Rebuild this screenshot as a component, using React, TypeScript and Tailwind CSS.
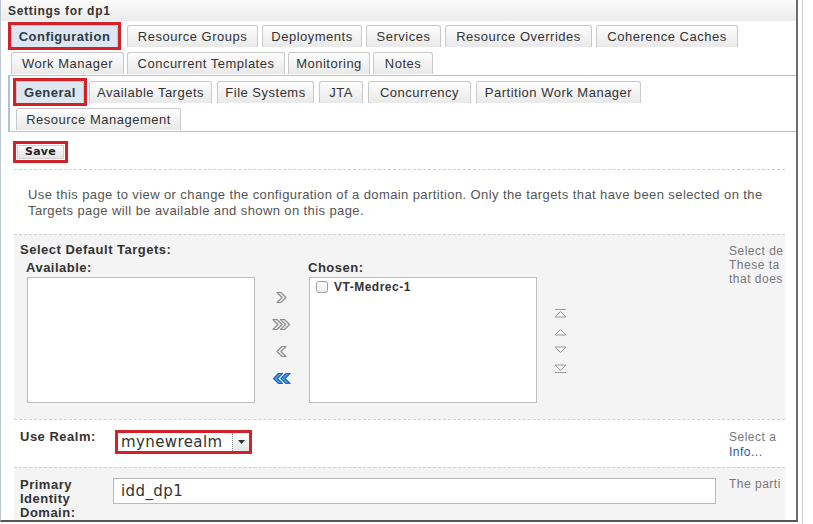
import React from 'react';

const RED = 'border-[#d42027]';

function Tab({ label, w, selected }: { label: string; w: number; selected?: boolean }) {
    const tab = (
        <div
            style={{ width: w }}
            className={
                'h-[22px] flex items-center justify-center rounded-t-[3px] border border-b-0 border-[#c9c9c9] text-[13px] tracking-[0.5px] whitespace-nowrap ' +
                (selected
                    ? 'bg-[#dde7f1] font-bold text-[#2f3a44]'
                    : 'bg-gradient-to-b from-[#fdfdfd] to-[#e9e9e9] text-[#333]')
            }
        >
            {label}
        </div>
    );
    if (!selected) return tab;
    return <div className={'border-[3px] ' + RED + ' -m-[3px]'}>{tab}</div>;
}

function Chevron({ double, left, blue }: { double?: boolean; left?: boolean; blue?: boolean }) {
    const stroke = blue ? '#1a66bd' : '#8c8c8c';
    const fill = blue ? '#4f9be3' : '#ececec';
    const one = (dx: number) => (
        <polygon
            key={dx}
            points={`${dx},0.5 ${dx + 4},0.5 ${dx + 9},5.5 ${dx + 4},10.5 ${dx},10.5 ${dx + 5},5.5`}
            fill={fill}
            stroke={stroke}
            strokeWidth={1.1}
            strokeLinejoin="round"
        />
    );
    const w = double ? 19 : 11;
    return (
        <svg width={w} height={11} viewBox={`0 0 ${w} 11`} className={left ? '-scale-x-100' : ''}>
            {double ? [one(1), one(8.5)] : one(1)}
        </svg>
    );
}

function Reorder({ down, bar }: { down?: boolean; bar?: boolean }) {
    return (
        <svg width={13} height={9} viewBox="0 0 13 9" className={down ? 'rotate-180' : ''}>
            {bar && <line x1="1" y1="0.5" x2="12" y2="0.5" stroke="#9a9a9a" />}
            <polygon points="6.5,2.5 12,8 1,8" fill="none" stroke="#9a9a9a" strokeLinejoin="round" />
        </svg>
    );
}

export default function App() {
    return (
        <div className="w-[813px] h-[524px] bg-white flex overflow-hidden font-['Liberation_Sans',Arial,sans-serif]">
            <div className="w-[798px] h-[522px] shrink-0 border-l border-[#bcc6d0] border-r-2 border-r-[#6d6d6d] border-b-2 border-b-[#555] flex flex-col">
                {/* Header */}
                <div className="h-[21px] shrink-0 pl-[7px] flex items-center bg-gradient-to-b from-[#fbfbfb] to-[#ebebeb] text-[12px] tracking-[0.7px] font-bold text-[#333]">
                    Settings for dp1
                </div>

                {/* Main tabs */}
                <div className="pl-[10px] pt-[4px] flex flex-col gap-[5px]">
                    <div className="flex gap-[4px]">
                        <Tab label="Configuration" w={107} selected />
                        <div className="w-px" />
                        <Tab label="Resource Groups" w={131} />
                        <Tab label="Deployments" w={100} />
                        <Tab label="Services" w={75} />
                        <Tab label="Resource Overrides" w={147} />
                        <Tab label="Coherence Caches" w={142} />
                    </div>
                    <div className="flex gap-[3px]">
                        <Tab label="Work Manager" w={113} />
                        <Tab label="Concurrent Templates" w={158} />
                        <Tab label="Monitoring" w={82} />
                        <Tab label="Notes" w={60} />
                    </div>
                </div>

                {/* Sub tabs */}
                <div className="ml-[7px] mt-px border-t border-b border-l-2 border-[#aec3d8] pl-[6px] pt-[5px] pb-px flex flex-col gap-[5px]">
                    <div className="flex gap-[5px]">
                        <Tab label="General" w={68} selected />
                        <Tab label="Available Targets" w={123} />
                        <Tab label="File Systems" w={97} />
                        <Tab label="JTA" w={44} />
                        <Tab label="Concurrency" w={103} />
                        <Tab label="Partition Work Manager" w={165} />
                    </div>
                    <div className="flex">
                        <Tab label="Resource Management" w={165} />
                    </div>
                </div>

                {/* Save */}
                <div className="pl-[12px] pt-[9px]">
                    <div className={'w-[55px] h-[22px] border-[3px] ' + RED + ' p-[1px]'}>
                        <div className="h-full flex items-center justify-center bg-gradient-to-b from-[#fcfcfc] to-[#e4e4e4] border border-[#cfcfcf] text-[11px] font-bold text-[#222] tracking-[0.3px] font-['DejaVu_Sans',sans-serif]">
                            Save
                        </div>
                    </div>
                </div>

                <div className="ml-[13px] mr-[11px] mt-[6px] border-t border-dashed border-[#cfcfcf]" />

                <p className="px-[27px] mt-[17px] mb-[15px] text-[13px] leading-[16px] tracking-[0.4px] text-[#555]">
                    Use this page to view or change the configuration of a domain partition. Only the targets that have been selected on the
                    Targets page will be available and shown on this page.
                </p>

                {/* Default targets */}
                <div className="ml-[13px] mr-[11px] border-t border-dashed border-[#cfcfcf] bg-[#f4f4f4] flex h-[187px]">
                    <div className="w-[715px] shrink-0 pl-[6px] pt-[8px]">
                        <div className="text-[13px] leading-[14px] tracking-[0.5px] font-bold text-[#333]">Select Default Targets:</div>
                        <div className="flex mt-[4px]">
                            <div className="pl-[6px] flex flex-col">
                                <div className="text-[13px] leading-[14px] tracking-[0.5px] font-bold text-[#333]">Available:</div>
                                <div className="ml-px mt-[2px] w-[228px] h-[126px] bg-white border border-[#bdbdbd]" />
                            </div>
                            <div className="w-[53px] flex flex-col items-center pt-[31px] gap-[16px]">
                                <Chevron />
                                <Chevron double />
                                <Chevron left />
                                <Chevron double left blue />
                            </div>
                            <div className="flex flex-col">
                                <div className="text-[13px] leading-[14px] tracking-[0.5px] font-bold text-[#333]">Chosen:</div>
                                <div className="ml-px mt-[2px] w-[228px] h-[126px] bg-white border border-[#bdbdbd] pl-[6px] pt-px">
                                    <div className="flex items-center gap-[6px] h-[16px]">
                                        <div className="w-[12px] h-[12px] rounded-[3px] border border-[#a0a0a0] bg-gradient-to-b from-white to-[#ececec]" />
                                        <span className="text-[12px] tracking-[0.5px] font-bold text-[#333]">VT-Medrec-1</span>
                                    </div>
                                </div>
                            </div>
                            <div className="w-[46px] flex flex-col items-center pt-[48px]">
                                <Reorder bar />
                                <div className="h-[9px]" />
                                <Reorder />
                                <div className="h-[10px]" />
                                <Reorder down />
                                <div className="h-[9px]" />
                                <Reorder down bar />
                            </div>
                        </div>
                    </div>
                    <div className="flex-1 min-w-0 whitespace-nowrap pt-[9px] text-[12px] leading-[14px] tracking-[0.5px] text-[#777]">
                        <div>Select de</div>
                        <div>These ta</div>
                        <div>that does</div>
                    </div>
                </div>

                {/* Use Realm */}
                <div className="ml-[13px] mr-[11px] border-t border-dashed border-[#cfcfcf] flex h-[48px]">
                    <div className="w-[715px] shrink-0 flex">
                        <div className="w-[101px] pl-[6px] pt-[10px] text-[13px] leading-[14px] tracking-[0.5px] font-bold text-[#333]">Use Realm:</div>
                        <div className="pt-[10px]">
                            <div className={'w-[137px] h-[24px] border-[3px] ' + RED + ' flex bg-white'}>
                                <div className="flex-1 flex items-center pl-[3px] text-[15px] tracking-[0.4px] text-[#333] font-['DejaVu_Sans',sans-serif] border-r border-dotted border-[#888]">
                                    mynewrealm
                                </div>
                                <div className="w-[16px] flex items-center justify-center bg-gradient-to-b from-white to-[#e6e6e6]">
                                    <svg width="7" height="4" viewBox="0 0 7 4">
                                        <polygon points="0,0 7,0 3.5,4" fill="#333" />
                                    </svg>
                                </div>
                            </div>
                        </div>
                    </div>
                    <div className="flex-1 min-w-0 whitespace-nowrap pt-[10px] text-[12px] leading-[15px] tracking-[0.5px]">
                        <div className="text-[#777]">Select a</div>
                        <div className="text-[#2b5c9c]">Info...</div>
                    </div>
                </div>

                {/* Primary identity domain */}
                <div className="ml-[13px] mr-[11px] border-t border-dashed border-[#cfcfcf] bg-[#f4f4f4] flex flex-1">
                    <div className="w-[715px] shrink-0 flex">
                        <div className="w-[99px] pl-[6px] pt-[10px] text-[13px] leading-[14px] tracking-[0.5px] font-bold text-[#333]">
                            Primary
                            <br />
                            Identity
                            <br />
                            Domain:
                        </div>
                        <div className="pt-[10px]">
                            <div className="w-[603px] h-[26px] bg-white border border-[#b9b9b9] flex items-center pl-[7px] text-[15px] tracking-[0.4px] text-[#333] font-['DejaVu_Sans',sans-serif]">
                                idd_dp1
                            </div>
                        </div>
                    </div>
                    <div className="flex-1 min-w-0 whitespace-nowrap pt-[9px] text-[12px] leading-[14px] tracking-[0.5px] text-[#777]">
                        The parti
                    </div>
                </div>
            </div>
            <div className="w-[4px] shrink-0" />
            <div className="w-px h-full bg-[#cfcfcf] shrink-0" />
        </div>
    );
}
